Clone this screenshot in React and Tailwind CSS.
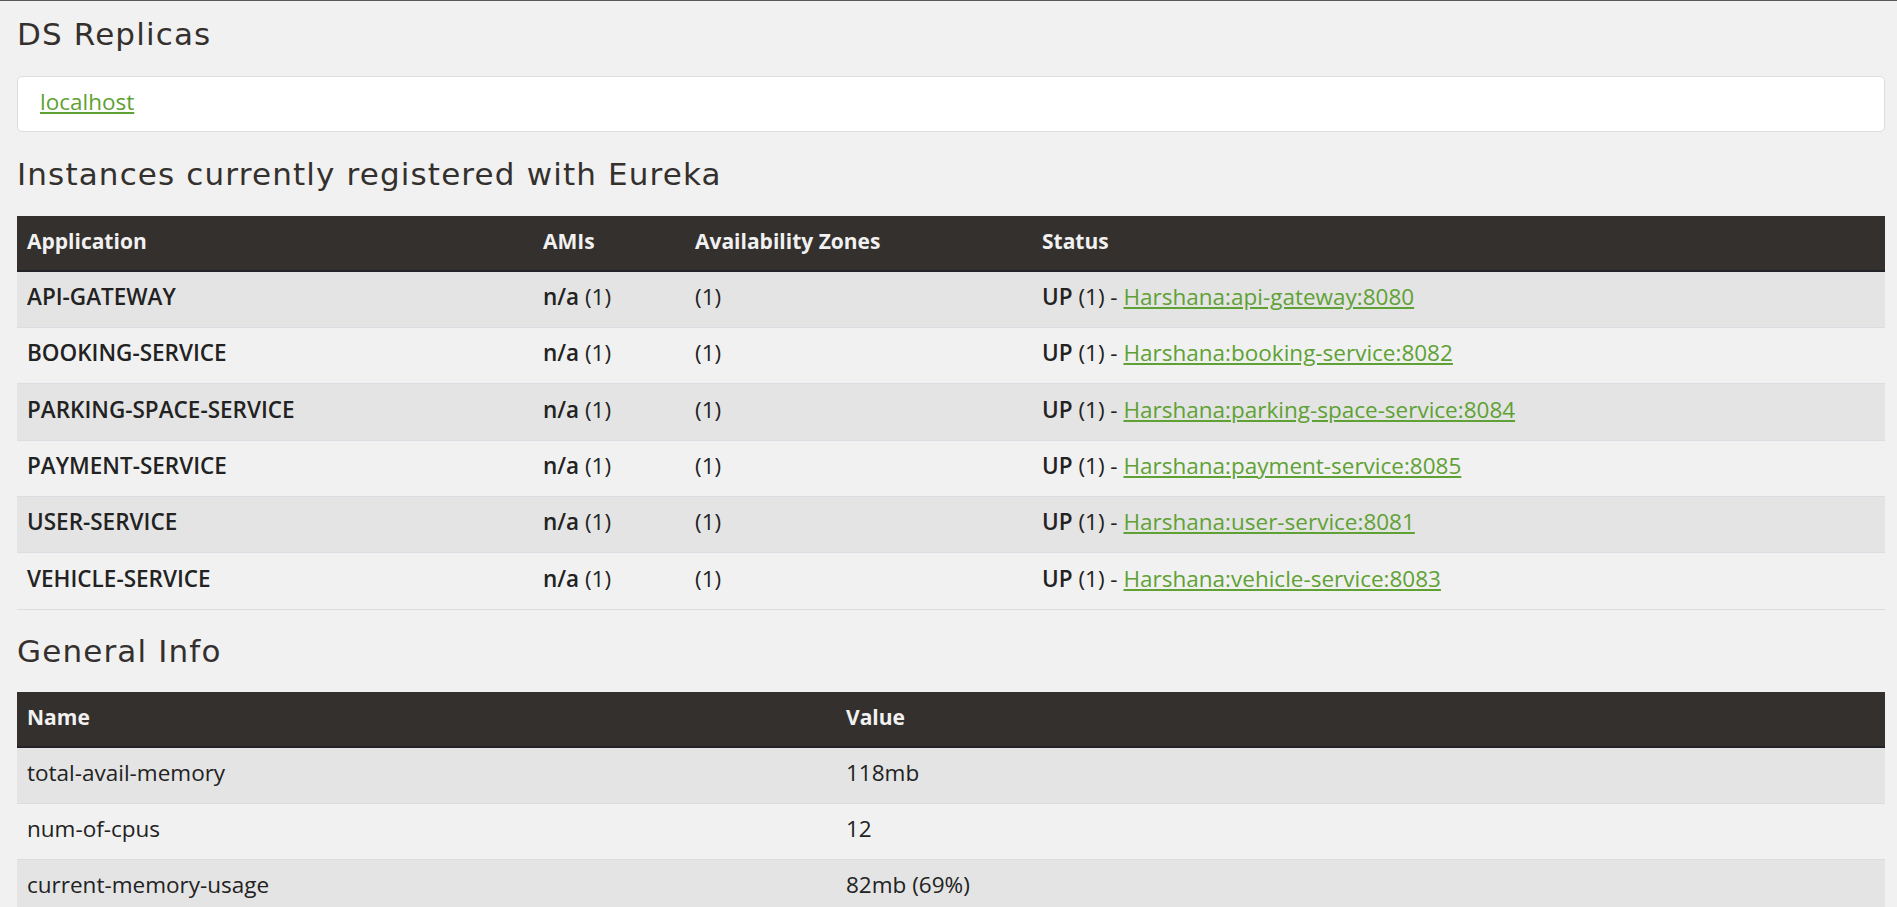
import React from "react";

const instances = [
  { app: "API-GATEWAY", link: "Harshana:api-gateway:8080" },
  { app: "BOOKING-SERVICE", link: "Harshana:booking-service:8082" },
  { app: "PARKING-SPACE-SERVICE", link: "Harshana:parking-space-service:8084" },
  { app: "PAYMENT-SERVICE", link: "Harshana:payment-service:8085" },
  { app: "USER-SERVICE", link: "Harshana:user-service:8081" },
  { app: "VEHICLE-SERVICE", link: "Harshana:vehicle-service:8083" },
];

const info = [
  { name: "total-avail-memory", value: "118mb" },
  { name: "num-of-cpus", value: "12" },
  { name: "current-memory-usage", value: "82mb (69%)" },
];

const headingFont = { fontFamily: '"DejaVu Sans", "Open Sans", sans-serif' };
const bodyFont = { fontFamily: '"Open Sans", "Noto Sans", sans-serif' };

const Heading = ({ children, className }) => (
  <h2
    className={`text-[31px] leading-[40px] font-normal tracking-[1.15px] text-[#34302d] ${className}`}
    style={headingFont}
  >
    {children}
  </h2>
);

const Th = ({ children, className = "" }) => (
  <th className={`h-[55px] px-[10px] pb-[3px] text-left text-[21px] font-bold ${className}`}>
    {children}
  </th>
);

const Td = ({ children, className = "" }) => (
  <td className={`h-[56.4px] px-[10px] pb-[5px] align-middle ${className}`}>{children}</td>
);

const App = () => {
  return (
    <div
      className="min-h-screen bg-[#f1f1f1] border-t border-[#5a5a5a] pl-[17px] pr-[12px] pb-10 text-[22.5px] text-[#222222]"
      style={bodyFont}
    >
      <Heading className="mt-[13px]">DS Replicas</Heading>

      <div className="mt-[22px] h-[56px] bg-white border border-[#dddddd] rounded-[5px] pl-[22px] pb-[5px] flex items-center">
        <a href="#" className="text-[#5fa134] underline">
          localhost
        </a>
      </div>

      <Heading className="mt-[22px]">Instances currently registered with Eureka</Heading>

      <table className="mt-[22px] w-full table-fixed border-collapse">
        <thead>
          <tr className="bg-[#34302d] text-[#f1f1f1] border-b-2 border-[#24232a]">
            <Th className="w-[516px]">Application</Th>
            <Th className="w-[152px]">AMIs</Th>
            <Th className="w-[347px]">Availability Zones</Th>
            <Th>Status</Th>
          </tr>
        </thead>
        <tbody>
          {instances.map((row, i) => (
            <tr
              key={row.app}
              className={`border-b border-[#dcdde2] ${i % 2 === 0 ? "bg-[#e4e4e4]" : "bg-[#f1f1f1]"}`}
            >
              <Td className="font-semibold">{row.app}</Td>
              <Td>
                <span className="font-semibold">n/a</span> (1)
              </Td>
              <Td>(1)</Td>
              <Td>
                <span className="font-semibold">UP</span> (1) -{" "}
                <a href="#" className="text-[#5fa134] underline">
                  {row.link}
                </a>
              </Td>
            </tr>
          ))}
        </tbody>
      </table>

      <Heading className="mt-[21px]">General Info</Heading>

      <table className="mt-[21px] w-full table-fixed border-collapse">
        <thead>
          <tr className="bg-[#34302d] text-[#f1f1f1] border-b-2 border-[#24232a]">
            <Th className="w-[819px]">Name</Th>
            <Th>Value</Th>
          </tr>
        </thead>
        <tbody>
          {info.map((row, i) => (
            <tr
              key={row.name}
              className={`border-b border-[#dcdde2] ${i % 2 === 0 ? "bg-[#e4e4e4]" : "bg-[#f1f1f1]"}`}
            >
              <Td>{row.name}</Td>
              <Td>{row.value}</Td>
            </tr>
          ))}
        </tbody>
      </table>
    </div>
  );
};

export default App;
